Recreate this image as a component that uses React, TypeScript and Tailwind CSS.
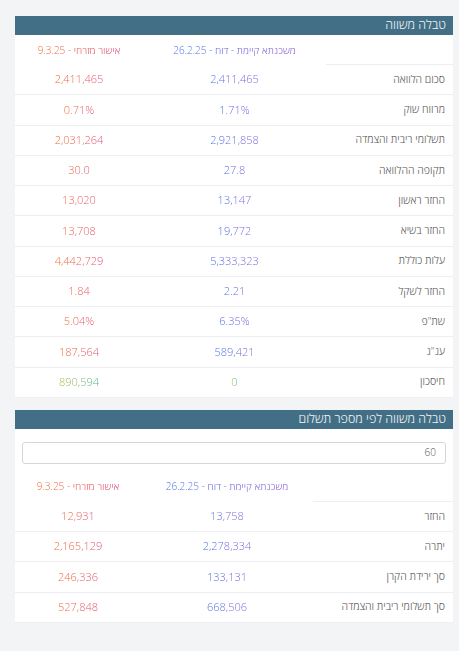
import React from "react"

type Tone = "blue" | "orange" | "green"

const toneClass: Record<Tone, string> = {
  blue: "bg-gradient-to-r from-[#3d6fe6] to-[#8a5fd6]",
  orange: "bg-gradient-to-r from-[#f2661c] to-[#e24f74]",
  green: "bg-gradient-to-r from-[#b5b436] to-[#3fae98]",
}

const Grad = ({ tone, children }: { tone: Tone; children: React.ReactNode }) => (
  <span className={`inline-block bg-clip-text text-transparent ${toneClass[tone]}`}>{children}</span>
)

interface Row {
  label: string
  current: string
  offer: string
  green?: boolean
}

const compareRows: Row[] = [
  { label: "סכום הלוואה", current: "2,411,465", offer: "2,411,465" },
  { label: "מרווח שוק", current: "1.71%", offer: "0.71%" },
  { label: "תשלומי ריבית והצמדה", current: "2,921,858", offer: "2,031,264" },
  { label: "תקופה ההלוואה", current: "27.8", offer: "30.0" },
  { label: "החזר ראשון", current: "13,147", offer: "13,020" },
  { label: "החזר בשיא", current: "19,772", offer: "13,708" },
  { label: "עלות כוללת", current: "5,333,323", offer: "4,442,729" },
  { label: "החזר לשקל", current: "2.21", offer: "1.84" },
  { label: 'שת"פ', current: "6.35%", offer: "5.04%" },
  { label: 'ענ"נ', current: "589,421", offer: "187,564" },
  { label: "חיסכון", current: "0", offer: "890,594", green: true },
]

const paymentRows: Row[] = [
  { label: "החזר", current: "13,758", offer: "12,931" },
  { label: "יתרה", current: "2,278,334", offer: "2,165,129" },
  { label: "סך ירידת הקרן", current: "133,131", offer: "246,336" },
  { label: "סך תשלומי ריבית והצמדה", current: "668,506", offer: "527,848" },
]

const CardTitle = ({ children }: { children: React.ReactNode }) => (
  <div className="h-[19px] bg-[#426f85] flex items-center pr-[7px] text-[12.5px] leading-none text-[#f1f4f6] font-light">
    {children}
  </div>
)

const CompareTable = ({ rows, cols }: { rows: Row[]; cols: string }) => (
  <div>
    <div className={`grid ${cols} h-[30px] items-stretch`}>
      <div className="border-b border-[#eceef2]" />
      <div className="flex items-center justify-center text-[10px]">
        <Grad tone="blue">משכנתא קיימת - דוח - 26.2.25</Grad>
      </div>
      <div className="flex items-center justify-center text-[10px]">
        <Grad tone="orange">אישור מזרחי - 9.3.25</Grad>
      </div>
    </div>
    {rows.map((row) => (
      <div key={row.label} className={`grid ${cols} h-[30.25px] items-center border-b border-[#eceef2]`}>
        <div className="pr-2 text-[10.5px] text-[#555]">{row.label}</div>
        <div className="text-center text-[11px]">
          <Grad tone={row.green ? "green" : "blue"}>{row.current}</Grad>
        </div>
        <div className="text-center text-[11px]">
          <Grad tone={row.green ? "green" : "orange"}>{row.offer}</Grad>
        </div>
      </div>
    ))}
  </div>
)

export default function App() {
  return (
    <div
      dir="rtl"
      className="min-h-[651px] bg-[#f3f4f6] pt-4 pl-[15px] pr-[6px] font-light"
      style={{ fontFamily: '"Open Sans", "Liberation Sans", "DejaVu Sans", sans-serif' }}
    >
      <div className="bg-white">
        <CardTitle>טבלה משווה</CardTitle>
        <CompareTable rows={compareRows} cols="grid-cols-[127px_183px_1fr]" />
      </div>

      <div className="bg-white mt-3">
        <CardTitle>טבלה משווה לפי מספר תשלום</CardTitle>
        <div className="px-[7px] pt-[13px] pb-2">
          <div className="h-[22px] border border-[#d6d6d6] rounded-[3px] flex items-center pr-[9px] text-[10px] text-[#555]">
            60
          </div>
        </div>
        <CompareTable rows={paymentRows} cols="grid-cols-[140px_172px_1fr]" />
      </div>
    </div>
  )
}
